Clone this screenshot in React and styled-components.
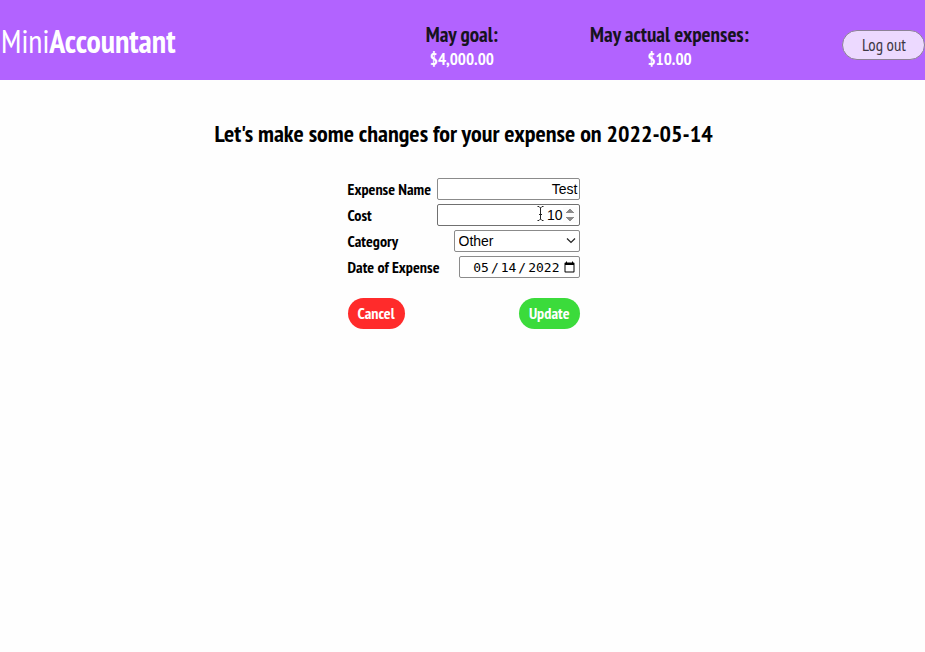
import React from "react";
import styled, { createGlobalStyle } from "styled-components";

const narrow = '"PT Sans Narrow", "Liberation Sans Narrow", "Open Sans", sans-serif';
const sans = '"Liberation Sans", Arial, sans-serif';

const GlobalStyle = createGlobalStyle`
  * { box-sizing: border-box; }
  body {
    margin: 0;
    background: #fefefe;
    color: #000;
    font-family: ${narrow};
    font-size: 16px;
  }
`;

const Header = styled.header`
  display: flex;
  align-items: center;
  gap: 93px;
  height: 80px;
  padding-left: 1px;
  background: #b263ff;
`;

const Logo = styled.h1`
  margin: 0 auto 0 0;
  padding-top: 2px;
  color: #fff;
  font-size: 32px;
  line-height: 40px;
  font-weight: 400;
`;

const Totals = styled.div`
  display: flex;
  gap: 92px;
  padding-top: 13px;
  text-align: center;
`;

const TotalTitle = styled.h2`
  margin: 0;
  color: #171320;
  font-size: 21px;
  line-height: 24px;
`;

const TotalAmount = styled.p`
  margin: 0;
  color: #fff;
  font-size: 17px;
  line-height: 24px;
  font-weight: 700;
`;

const LogOut = styled.button`
  height: 30px;
  margin-top: 9px;
  padding: 0 18px 0 19px;
  border: 1px solid #8c8296;
  border-radius: 15px;
  background: #ecd9ff;
  color: #3d3844;
  font: 17px ${narrow};
`;

const Main = styled.main`
  display: flex;
  flex-direction: column;
  align-items: center;
  padding: 38px 0 0 2px;
`;

const Title = styled.h2`
  margin: 0 0 28px;
  font-size: 24px;
  line-height: 32px;
`;

const Form = styled.form`
  width: 232px;
`;

const Row = styled.div`
  display: flex;
  justify-content: space-between;
  align-items: flex-start;
  height: 22px;
  margin-bottom: 4px;
`;

const Label = styled.label`
  font-weight: 700;
  line-height: 22px;
  white-space: nowrap;
`;

const Field = styled.div`
  position: relative;
  display: flex;
`;

const Input = styled.input`
  width: ${(p) => p.$width};
  height: 22px;
  padding: 1px;
  border: 1px solid ${(p) => (p.$dark ? "#707070" : "#8b8b8b")};
  border-radius: 2px;
  outline: 0;
  background: #fff;
  color: #000;
  font: 14px ${sans};
  text-align: right;

  &[type="date"] {
    font: 13px "DejaVu Sans Mono", monospace;
  }

  &::-webkit-datetime-edit-text {
    padding: 0 1px;
  }

  &::-webkit-inner-spin-button {
    opacity: 1;
    background: #efefef;
  }
`;

const Select = styled.select`
  appearance: none;
  width: 126px;
  height: 22px;
  padding: 0 20px 1px 4px;
  border: 1px solid #8b8b8b;
  border-radius: 2px;
  background: #fff;
  color: #000;
  font: 14px ${sans};
`;

const Chevron = styled.svg`
  position: absolute;
  top: 7px;
  right: 4px;
  width: 10px;
  height: 7px;
  pointer-events: none;
`;

const Pointer = styled.svg`
  position: absolute;
  top: 1px;
  right: 35px;
  width: 9px;
  height: 17px;
  pointer-events: none;
`;

const Actions = styled.div`
  display: flex;
  justify-content: space-between;
  margin-top: 20px;
`;

const Action = styled.button`
  height: 31px;
  padding: 0 10px 1px;
  border: 0;
  border-radius: 16px;
  background: ${(p) => p.$color};
  color: #fff;
  font: 700 16px ${narrow};
`;

export default function App() {
  return (
    <>
      <GlobalStyle />
      <Header>
        <Logo>Mini<b>Accountant</b></Logo>
        <Totals>
          <div>
            <TotalTitle>May goal:</TotalTitle>
            <TotalAmount>$4,000.00</TotalAmount>
          </div>
          <div>
            <TotalTitle>May actual expenses:</TotalTitle>
            <TotalAmount>$10.00</TotalAmount>
          </div>
        </Totals>
        <LogOut type="button">Log out</LogOut>
      </Header>
      <Main>
        <Title>Let's make some changes for your expense on 2022-05-14</Title>
        <Form onSubmit={(e) => e.preventDefault()}>
          <Row>
            <Label htmlFor="name">Expense Name</Label>
            <Input id="name" type="text" defaultValue="Test" $width="143px" />
          </Row>
          <Row>
            <Label htmlFor="cost">Cost</Label>
            <Field>
              <Input id="cost" type="number" defaultValue="10" $width="143px" $dark />
              <Pointer viewBox="0 0 9 17" fill="none" stroke="#222" aria-hidden="true">
                <path d="M1.5 1.5h1.5l1.5 1.5 1.5-1.5h1.5M1.5 15.5h1.5l1.5-1.5 1.5 1.5h1.5M4.5 3v11M3 9.5h3" />
              </Pointer>
            </Field>
          </Row>
          <Row>
            <Label htmlFor="category">Category</Label>
            <Field>
              <Select id="category" defaultValue="Other">
                <option>Other</option>
              </Select>
              <Chevron viewBox="0 0 10 7" fill="none" stroke="#222" strokeWidth="1.2" aria-hidden="true">
                <path d="M1 1.5l4 4 4-4" />
              </Chevron>
            </Field>
          </Row>
          <Row>
            <Label htmlFor="date">Date of Expense</Label>
            <Input id="date" type="date" defaultValue="2022-05-14" $width="121px" />
          </Row>
          <Actions>
            <Action type="button" $color="#ff2b2b">Cancel</Action>
            <Action type="submit" $color="#3bdb3b">Update</Action>
          </Actions>
        </Form>
      </Main>
    </>
  );
}
